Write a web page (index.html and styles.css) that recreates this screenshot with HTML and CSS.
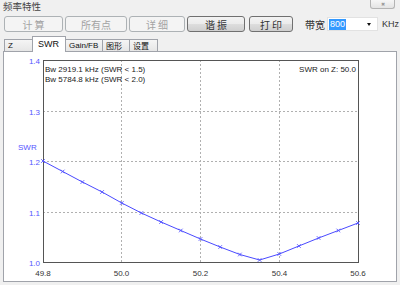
FILE: index.html
```html
<!DOCTYPE html>
<html lang="zh">
<head>
    <meta charset="UTF-8">
    <title>频率特性</title>
    <link rel="stylesheet" href="styles.css">
</head>
<body>
    <div id="window">
        <div class="titlebar">
            <span class="title">频率特性</span>
            <span class="close-btn">&#x2716;</span>
        </div>

        <div class="toolbar">
            <button class="btn w59" disabled>计 算</button>
            <button class="btn w62" disabled>所有点</button>
            <button class="btn w56" disabled>详 细</button>
            <button class="btn w58">谐 振</button>
            <button class="btn w44 gap">打 印</button>
            <span class="label">带宽</span>
            <div class="combo">
                <span class="combo-value">800</span>
                <span class="combo-arrow"></span>
            </div>
            <span class="unit">KHz</span>
        </div>

        <div class="tabs">
            <div class="tab t-z">Z</div>
            <div class="tab t-swr active">SWR</div>
            <div class="tab t-gain">Gain/FB</div>
            <div class="tab t-graph">图形</div>
            <div class="tab t-set">设置</div>
        </div>

        <div class="panel">
            <svg class="chart" width="392" height="229" viewBox="0 0 392 229">
                <defs>
                    <marker id="cross" viewBox="-3 -3 6 6" markerWidth="6" markerHeight="6" markerUnits="userSpaceOnUse">
                        <path d="M-1.8 -1.8 L1.8 1.8 M-1.8 1.8 L1.8 -1.8" stroke="#5555ff" stroke-width="0.9" fill="none"/>
                    </marker>
                </defs>
                <!-- page coordinates, panel content starts at (4, 51) -->
                <g transform="translate(-4 -51)">
                    <g class="grid">
                        <line x1="43" y1="110.5" x2="358" y2="110.5"/>
                        <line x1="43" y1="160.5" x2="358" y2="160.5"/>
                        <line x1="43" y1="211.5" x2="358" y2="211.5"/>
                        <line x1="121.5" y1="59" x2="121.5" y2="261"/>
                        <line x1="200.5" y1="59" x2="200.5" y2="261"/>
                        <line x1="279.5" y1="59" x2="279.5" y2="261"/>
                    </g>
                    <rect class="frame" x="43.5" y="59.5" width="315" height="202"/>

                    <g class="ylabels">
                        <text x="40" y="62.5">1.4</text>
                        <text x="40" y="113.5">1.3</text>
                        <text x="40" y="163.5">1.2</text>
                        <text x="40" y="214.5">1.1</text>
                        <text x="40" y="264.5">1.0</text>
                    </g>
                    <text class="axis-title" x="18" y="149">SWR</text>

                    <g class="xlabels">
                        <text x="43" y="275">49.8</text>
                        <text x="121.5" y="275">50.0</text>
                        <text x="200.5" y="275">50.2</text>
                        <text x="279.5" y="275">50.4</text>
                        <text x="358" y="275">50.6</text>
                    </g>

                    <text class="info" x="45" y="71">Bw 2919.1 kHz (SWR &lt; 1.5)</text>
                    <text class="info" x="45" y="81">Bw 5784.8 kHz (SWR &lt; 2.0)</text>
                    <text class="info end" x="356" y="71">SWR on Z: 50.0</text>

                    <polyline class="curve" marker-start="url(#cross)" marker-mid="url(#cross)" marker-end="url(#cross)"
                        points="43,160 62.7,170.5 82.4,181 102.1,191 121.8,202 141.4,212 161.1,221 180.8,229.5 200.5,238 220.2,246 239.9,253.5 259.6,259 279.3,253 298.9,245 318.6,237 338.3,229.5 358,222"/>
                </g>
            </svg>
        </div>
    </div>
</body>
</html>
```

FILE: styles.css
```css
body {
    margin: 0;
    background-color: #f0f0f0;
    font-family: "Liberation Sans", "Noto Sans CJK SC", sans-serif;
    color: #222;
    width: 400px;
    height: 285px;
    overflow: hidden;
}

#window {
    width: 400px;
    height: 285px;
}

.titlebar {
    display: flex;
    justify-content: space-between;
    align-items: flex-start;
    height: 13px;
}

.title {
    font-family: "Noto Sans CJK SC", sans-serif;
    font-size: 9.5px;
    line-height: 12px;
    padding-left: 3px;
    color: #444;
}

.close-btn {
    width: 25px;
    height: 9px;
    margin-right: 5px;
    box-sizing: border-box;
    border: 1px solid #b4b4b4;
    border-top: none;
    border-radius: 0 0 3px 3px;
    background: linear-gradient(#f6f6f6, #e4e4e4);
    color: #9a9a9a;
    font-size: 5px;
    line-height: 8px;
    text-align: center;
}

.toolbar {
    display: flex;
    align-items: center;
    height: 16px;
    margin-top: 3px;
    padding-left: 4px;
}

.btn {
    height: 16px;
    box-sizing: border-box;
    margin: 0 2px 0 0;
    padding: 0;
    border: 1px solid #707070;
    border-radius: 3px;
    background: linear-gradient(#f3f3f3, #ebebeb 50%, #dddddd 51%, #cfcfcf);
    font-family: "Noto Sans CJK SC", sans-serif;
    font-size: 10px;
    line-height: 13px;
    color: #333;
}

.btn:disabled {
    border-color: #adb2b5;
    background: #f4f4f4;
    color: #a3a3a3;
}

.w59 { width: 59px; }
.w62 { width: 62px; }
.w56 { width: 56px; }
.w58 { width: 58px; }
.w44 { width: 44px; }
.gap { margin-left: 2px; }

.label {
    font-family: "Noto Sans CJK SC", sans-serif;
    font-size: 10px;
    margin-left: 10px;
    color: #333;
}

.combo {
    display: flex;
    align-items: center;
    width: 51px;
    height: 14px;
    margin-left: 2px;
    box-sizing: border-box;
    background-color: #fff;
    border: 1px solid #e2e2e2;
    padding-left: 1px;
}

.combo-value {
    background-color: #3399ff;
    color: #fff;
    font-size: 9px;
    line-height: 11px;
    padding: 0 1px;
}

.combo-arrow {
    margin-left: auto;
    margin-right: 6px;
    width: 0;
    height: 0;
    border-left: 2.5px solid transparent;
    border-right: 2.5px solid transparent;
    border-top: 3px solid #111;
}

.unit {
    font-size: 9px;
    margin-left: 4px;
    color: #333;
}

.tabs {
    display: flex;
    align-items: flex-end;
    height: 16px;
    margin-top: 3px;
    padding-left: 4px;
}

.tab {
    position: relative;
    height: 12px;
    box-sizing: border-box;
    border: 1px solid #a0a3aa;
    border-bottom: none;
    margin-right: -1px;
    background: linear-gradient(#f5f5f5, #e6e6e6);
    font-size: 8px;
    line-height: 11px;
    padding-left: 3px;
    color: #111;
}

.tab.active {
    height: 16px;
    margin-bottom: -1px;
    background: #fff;
    z-index: 1;
    padding-left: 5px;
    line-height: 15px;
    font-size: 9px;
}

.t-z { width: 29px; }
.t-swr { width: 34px; }
.t-gain { width: 38px; }
.t-graph { width: 28px; font-family: "Noto Sans CJK SC", sans-serif; }
.t-set { width: 29px; font-family: "Noto Sans CJK SC", sans-serif; }

.panel {
    width: 394px;
    height: 231px;
    margin-left: 3px;
    box-sizing: border-box;
    border: 1px solid #a0a3aa;
    background-color: #fff;
}

.chart {
    display: block;
}

.chart text {
    font-family: "Liberation Sans", sans-serif;
    font-size: 8px;
}

.grid line {
    stroke: #b0b0b0;
    stroke-width: 1;
    stroke-dasharray: 2 2;
}

.frame {
    fill: none;
    stroke: #555;
    stroke-width: 1;
}

.ylabels text {
    fill: #5555ff;
    text-anchor: end;
}

.axis-title {
    fill: #5555ff;
}

.xlabels text {
    fill: #333;
    text-anchor: middle;
}

.info {
    fill: #222;
}

.info.end {
    text-anchor: end;
}

.curve {
    fill: none;
    stroke: #4a4aff;
    stroke-width: 1;
}
```
